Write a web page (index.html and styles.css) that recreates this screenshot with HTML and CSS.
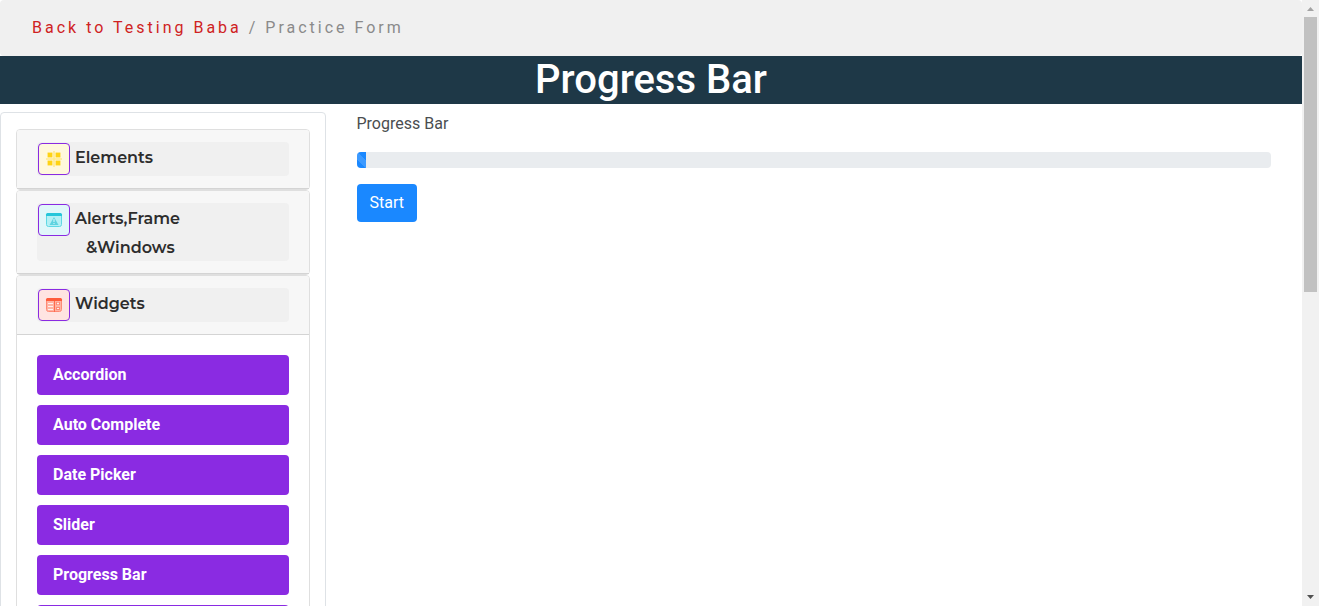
FILE: index.html
```html
<!DOCTYPE html>
<html lang="en">
<head>
<meta charset="utf-8">
<meta name="viewport" content="width=device-width, initial-scale=1">
<title>Progress Bar</title>
<link rel="stylesheet" href="styles.css">
</head>
<body>
<div class="page">
  <nav class="breadcrumb" aria-label="Breadcrumb"><a class="breadcrumb-link" href="#">Back to Testing Baba</a> / Practice Form</nav>
  <h1 class="title">Progress Bar</h1>
  <div class="layout">
    <aside class="sidebar">
      <section class="group">
        <h2 class="group-header">
          <button class="toggle" type="button">
            <svg class="icon icon-elements" viewBox="0 0 30 30" aria-hidden="true">
              <path d="M15 7v16M7 15h16" stroke="#ffe98a" stroke-width="1.5"/>
              <g fill="#ffd314" stroke="#ffe98a" stroke-width="1">
                <rect x="8.5" y="8.5" width="5" height="5" rx="1"/><rect x="16.5" y="8.5" width="5" height="5" rx="1"/>
                <rect x="8.5" y="16.5" width="5" height="5" rx="1"/><rect x="16.5" y="16.5" width="5" height="5" rx="1"/>
              </g>
            </svg>
            <span class="toggle-text">Elements</span>
          </button>
        </h2>
      </section>
      <section class="group">
        <h2 class="group-header">
          <button class="toggle" type="button">
            <svg class="icon icon-alerts" viewBox="0 0 30 30" aria-hidden="true">
              <rect x="7.5" y="8.5" width="15" height="13" rx="2" fill="#b4f0f5" stroke="#5fd8e4"/>
              <path d="M7 11V9.500Q7 8 8.500 8h13Q23 8 23 9.500V11z" fill="#26c6da"/>
              <path d="M15 12l4.500 8h-9z" fill="#5fd3e0"/>
              <path d="M15 14v3M15 18v1" stroke="#e0f8fa"/>
            </svg>
            <span class="toggle-text">Alerts,Frame <span class="toggle-second">&amp;Windows</span></span>
          </button>
        </h2>
      </section>
      <section class="group">
        <h2 class="group-header">
          <button class="toggle" type="button" aria-expanded="true">
            <svg class="icon icon-widgets" viewBox="0 0 30 30" aria-hidden="true">
              <rect x="7.500" y="8.5" width="15" height="13" rx="2" fill="#ffb3a3" stroke="#ff8a75"/>
              <path d="M7 11V9.500Q7 8 8.500 8h13Q23 8 23 9.500V11z" fill="#ff5c3c"/>
              <path d="M15.500 11v11" stroke="#ff6b4d"/>
              <path d="M9 13.500h5M9 16.500h5M9 19.500h5" stroke="#fff0ed"/>
              <path d="M17 12h4v3h-4zM17 17h4v3h-4z" fill="#ff8a75"/>
              <path d="M18 13.500h2M19 12.500v2M18 18.500h2" stroke="#fff0ed"/>
            </svg>
            <span class="toggle-text">Widgets</span>
          </button>
        </h2>
        <nav class="menu" aria-label="Widgets">
          <a class="menu-link" href="#">Accordion</a>
          <a class="menu-link" href="#">Auto Complete</a>
          <a class="menu-link" href="#">Date Picker</a>
          <a class="menu-link" href="#">Slider</a>
          <a class="menu-link" href="#">Progress Bar</a>
          <a class="menu-link" href="#" aria-label="More widgets"></a>
        </nav>
      </section>
    </aside>
    <main class="content">
      <p class="caption">Progress Bar</p>
      <div class="progress" role="progressbar" aria-label="Progress" aria-valuemin="0" aria-valuemax="100" aria-valuenow="1"><div class="progress-fill" style="width: 1%"></div></div>
      <button class="start" type="button">Start</button>
    </main>
  </div>
</div>
<div class="scrollbar" aria-hidden="true">
  <svg class="arrow" viewBox="0 0 17 17"><path d="M5 11L8.500 7L12 11z" fill="#a3a3a3"/></svg>
  <div class="track"><div class="thumb"></div></div>
  <svg class="arrow" viewBox="0 0 17 17"><path d="M5 6L8.500 10L12 6z" fill="#505050"/></svg>
</div>
</body>
</html>
```
FILE: styles.css
```css
* { box-sizing: border-box; }

body {
  margin: 0;
  height: 100vh;
  display: flex;
  overflow: hidden;
  background: #fff;
  color: #212529;
  font-family: Roboto, "Liberation Sans", sans-serif;
  font-size: 16px;
  line-height: 24px;
}

.page { flex: 1; min-width: 0; overflow: hidden; }

.breadcrumb {
  padding: 16px 32px;
  border-radius: 4px;
  background: #f0f0f0;
  color: #8a8a8a;
  letter-spacing: 3px;
}
.breadcrumb-link { color: #cf2222; text-decoration: none; }

.title {
  margin: 0;
  background: #1e3847;
  color: #fff;
  font-size: 40px;
  font-weight: 500;
  line-height: 48px;
  text-align: center;
}

.layout { display: flex; align-items: flex-start; }

.sidebar {
  width: 25%;
  margin-top: 8px;
  padding: 16px 15px;
  border: 1px solid #dee2e6;
  border-radius: 4px;
}

.group { border: 1px solid #dfdfdf; border-radius: 4px; }
.group-header {
  margin: 0;
  padding: 12px 20px;
  border-bottom: 1px solid #d4d4d4;
  border-radius: 3px 3px 0 0;
  background: #f7f7f7;
}
.toggle {
  display: flex;
  align-items: flex-start;
  gap: 5px;
  width: 100%;
  min-height: 34px;
  padding: 0;
  border: 0;
  border-radius: 4px;
  background: #f0f0f0;
  color: #2d2d2d;
  font: 600 16px/29px Montserrat, Inter, sans-serif;
  text-align: left;
}
.toggle-text { padding-top: 1px; margin-bottom: -1px; }
.toggle-second { display: block; padding-left: 11px; }

.icon {
  flex: none;
  width: 32px;
  height: 32px;
  margin: 1px 0 1px 1px;
  border: 1px solid #8a2be2;
  border-radius: 4px;
}
.icon-elements { background: #fff8dc; }
.icon-alerts { background: #e0f7fa; }
.icon-widgets { background: #ffe4e1; }

.menu { display: grid; gap: 10px; padding: 20px; }
.menu-link {
  height: 40px;
  padding: 8px 16px;
  border-radius: 4px;
  background: #8a2be2;
  color: #fff;
  font-weight: 700;
  text-decoration: none;
}

.content { flex: 1; padding: 8px 31px; }
.caption { margin: 0 0 16px; color: #4a4d50; }
.progress {
  height: 16px;
  margin-bottom: 16px;
  overflow: hidden;
  border-radius: 4px;
  background: #e9ecef;
}
.progress-fill {
  height: 100%;
  background: #1a88ff linear-gradient(45deg, #ffffff26 25%, transparent 25%, transparent 50%, #ffffff26 50%, #ffffff26 75%, transparent 75%) 8px 0 / 16px 16px;
}
.start {
  padding: 7px 13px;
  border: 0;
  border-radius: 4px;
  background: #1a88ff;
  color: #fff;
  font: 400 16px/24px Roboto, sans-serif;
}

.scrollbar {
  display: flex;
  flex-direction: column;
  width: 17px;
  background: #f1f1f1;
}
.arrow { flex: none; width: 17px; height: 17px; }
.track { flex: 1; padding: 0 2px; }
.thumb { height: 48%; background: #c1c1c1; }
```
